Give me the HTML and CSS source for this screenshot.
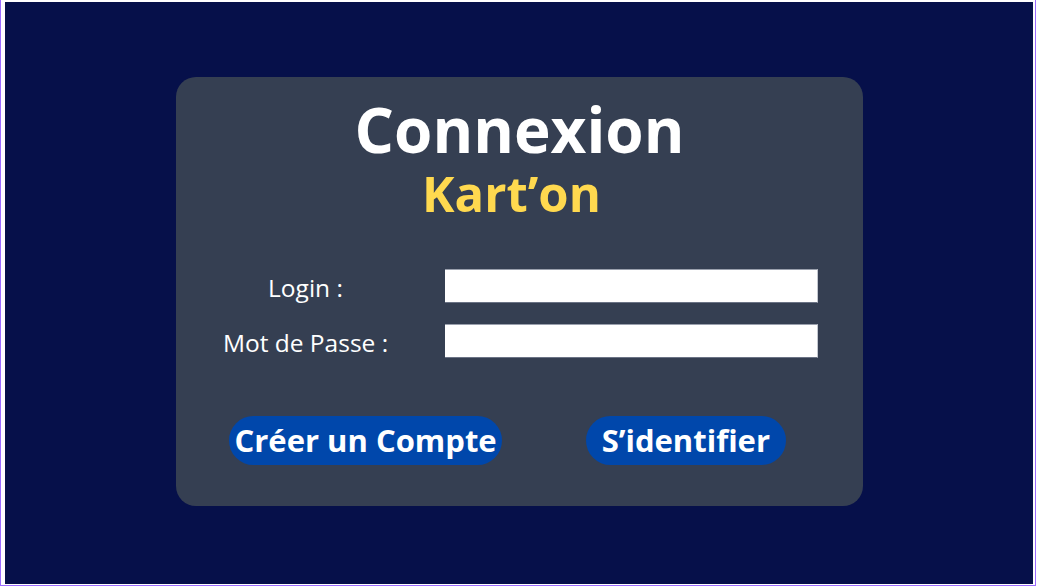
FILE: index.html
```html
<!DOCTYPE html>
<html lang="fr">
<head>
<meta charset="utf-8">
<title>Connexion - Kart'on</title>
<link rel="stylesheet" href="styles.css">
</head>
<body>
<div class="frame">
  <main class="screen">
    <section class="card">
      <h1 class="title">Connexion</h1>
      <h2 class="brand">Kart’on</h2>
      <form class="form">
        <label class="label" for="login">Login :</label>
        <input class="field" id="login" type="text">
        <label class="label" for="pass">Mot de Passe :</label>
        <input class="field" id="pass" type="password">
      </form>
      <div class="actions">
        <button class="btn btn-create" type="button">Créer un Compte</button>
        <button class="btn btn-login" type="button">S’identifier</button>
      </div>
    </section>
  </main>
</div>
</body>
</html>
```

FILE: styles.css
```css
* { box-sizing: border-box; }
html, body {
  margin: 0;
  padding: 0;
  background: #ffffff;
  font-family: "Open Sans", "Liberation Sans", sans-serif;
  overflow: hidden;
}
.frame {
  width: 1036px;
  height: 586px;
  border: 1px solid #9b6bff;
  border-top: 0;
  padding: 2px 2px 1px 4px;
}
.screen {
  height: 100%;
  background: #06104a;
  display: flex;
  justify-content: flex-start;
  padding: 75px 0 0 171px;
}
.card {
  width: 687px;
  height: 429px;
  background: #353f52;
  border-radius: 20px;
  padding: 21px 45px 0 24px;
  display: flex;
  flex-direction: column;
}
.title {
  margin: 0;
  font-size: 62px;
  line-height: 62px;
  font-weight: 700;
  color: #ffffff;
  text-align: center;
  padding-left: 21px;
}
.brand {
  margin: 9px 0 0;
  font-size: 49px;
  line-height: 49px;
  font-weight: 700;
  color: #ffd94f;
  text-align: center;
  padding-left: 5px;
}
.form {
  margin: 51px 0 0;
  display: grid;
  grid-template-columns: 211px 373px;
  grid-auto-rows: 34px;
  column-gap: 34px;
  row-gap: 21px;
  align-items: center;
}
.label {
  font-size: 24.5px;
  line-height: 31px;
  height: 34px;
  padding-top: 3px;
  color: #ffffff;
  text-align: center;
  white-space: nowrap;
}
.field {
  height: 34px;
  margin: 0;
  background: #ffffff;
  border: 0;
  border-top: 1px solid #9aa0ad;
  border-right: 1px solid #c4c8d0;
  border-bottom: 1px solid #6b7385;
  outline: none;
}
.actions {
  margin-top: 58px;
  padding-left: 29px;
  display: flex;
  gap: 84px;
}
.btn {
  height: 49px;
  border: 0;
  border-radius: 25px;
  background: #0047ab;
  color: #ffffff;
  font-family: "Open Sans", "Liberation Sans", sans-serif;
  font-size: 31px;
  font-weight: 700;
  line-height: 49px;
  white-space: nowrap;
}
.btn-create { padding: 0 5.5px; }
.btn-login { padding: 0 15.5px; }
```
